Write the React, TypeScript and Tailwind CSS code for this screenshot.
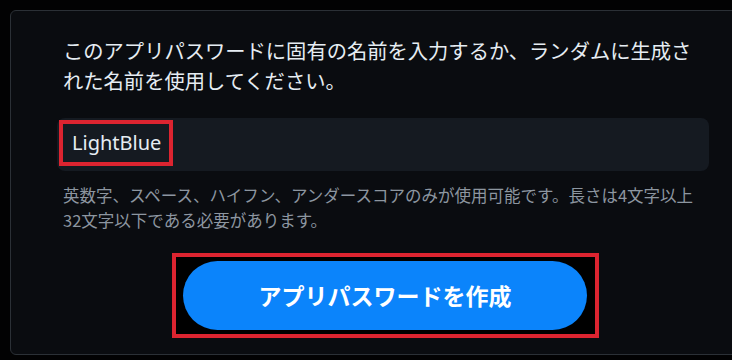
import React from "react";

export default function App() {
  const jp = { fontFamily: '"Noto Sans CJK JP", "Noto Sans", sans-serif' };
  return (
    <div className="w-[732px] h-[360px] overflow-hidden bg-[#020203] pt-[10px] pl-[10px]">
      <div
        className="w-[740px] h-[345px] border border-[#2b3036] rounded-[6px] bg-[#0a0c10] pl-[46px] pt-[24px]"
        style={jp}
      >
        <p className="w-[638px] pl-[6px] text-[20.3px] leading-[30px] text-[#e6edf3]">
          このアプリパスワードに固有の名前を入力するか、ランダムに生成された名前を使用してください。
        </p>
        <div className="mt-[23px] w-[652px] h-[53px] rounded-[8px] bg-[#151a21] pt-[2px] pl-[2px]">
          <div
            className="inline-flex items-center h-[46px] border-4 border-[#dc2430] pl-[9px] pr-[8px] text-[20px] text-[#e6edf3]"
            style={{ fontFamily: '"Noto Sans", "Open Sans", sans-serif' }}
          >
            LightBlue
          </div>
        </div>
        <p className="mt-[12px] w-[646px] pl-[6px] text-[16.5px] leading-[25px] text-[#8d96a0]">
          英数字、スペース、ハイフン、アンダースコアのみが使用可能です。長さは4文字以上32文字以下である必要があります。
        </p>
        <div className="mt-[20px] w-[652px] flex justify-center pl-[5px]">
          <div className="border-4 border-[#dc2430] bg-black pl-[7px] pr-[8px] pt-[4px] pb-[4px]">
            <button className="w-[404px] h-[69px] rounded-full bg-[#0b84fb] text-white font-bold text-[23px]">
              アプリパスワードを作成
            </button>
          </div>
        </div>
      </div>
    </div>
  );
}
